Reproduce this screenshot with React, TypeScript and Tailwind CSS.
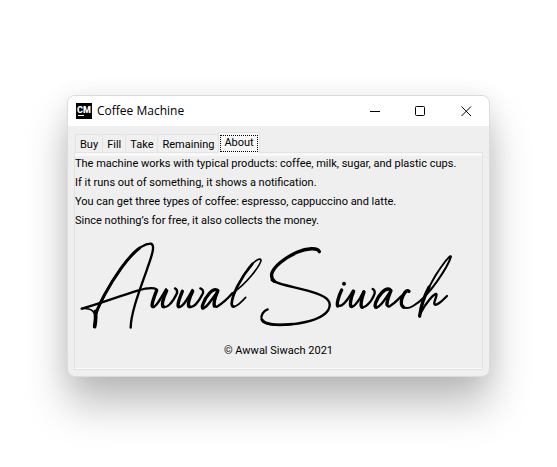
import { useState } from "react";

const tabs = ["Buy", "Fill", "Take", "Remaining", "About"];

const lines = [
  "The machine works with typical products: coffee, milk, sugar, and plastic cups.",
  "If it runs out of something, it shows a notification.",
  "You can get three types of coffee: espresso, cappuccino and latte.",
  "Since nothing’s for free, it also collects the money.",
];

// Handwritten signature, drawn as pen strokes.
function Signature() {
  return (
    <svg
      role="img"
      aria-label="Signature of Awwal Siwach"
      viewBox="12 0 1158 330"
      className="block h-[110px] w-[386px]"
      fill="none"
      stroke="#000"
      strokeLinecap="round"
      strokeLinejoin="round"
    >
      <g strokeWidth="7">
        <path d="M72 262C80 228 112 168 150 115C180 74 215 40 240 41C254 46 242 78 228 118C208 176 180 245 179 293" />
        <path d="M32 236C90 220 140 200 200 182C228 174 248 173 256 178" />
        <path d="M285 178C268 208 254 232 246 231M318 190C304 220 288 234 278 231M312 175Q320 178 318 190" />
        <path d="M364 180C350 206 336 232 324 231M396 190C382 218 366 234 356 231M388 175Q398 178 396 190" />
        <path d="M442 181C424 206 406 236 394 235M441 181C428 216 424 232 438 230C456 220 470 206 484 190" />
        <path d="M484 190C530 158 566 108 570 92C570 82 554 88 534 112C508 146 482 200 482 222C484 240 506 222 524 202" strokeWidth="5" />
        <path d="M602 150C622 166 690 173 736 190C770 202 784 216 772 240C756 264 710 278 660 283C620 287 580 285 572 268C568 256 578 242 590 238" />
        <path d="M800 222C806 240 830 212 846 182M840 224C840 242 864 216 878 184M870 226C872 242 900 222 911 190Q912 180 905 177" />
        <path d="M960 180C944 206 926 234 914 232M960 180C944 218 944 232 956 229C974 218 982 206 994 196" />
        <path d="M1014 186C1012 176 1000 186 994 202C984 230 1002 242 1026 228C1076 200 1132 106 1140 80C1138 72 1114 104 1094 136C1068 180 1048 230 1046 260" strokeWidth="6" />
        <path d="M1048 250C1066 216 1088 192 1096 192C1100 196 1088 214 1090 222C1094 230 1112 214 1128 198" />
      </g>
      <g strokeWidth="10">
        <path d="M75 250C84 224 112 168 150 115C170 88 186 68 206 54" strokeWidth="9" />
        <path d="M257 181C250 200 238 230 246 230M287 182C276 204 270 230 278 230" />
        <path d="M334 184C326 204 316 230 324 230M365 184C354 204 348 230 356 230" />
        <path d="M438 180C424 174 404 200 396 222Q392 232 396 234M440 184Q426 216 430 228" />
        <path d="M544 102C508 144 484 194 482 220Q482 230 488 230" strokeWidth="8" />
        <path d="M745 65C740 52 708 54 678 67C640 84 608 110 602 132C601 140 603 148 610 154" />
        <path d="M573 270C582 286 630 286 664 282" strokeWidth="8" />
        <path d="M812 180C804 196 796 222 800 228M848 184C840 202 834 230 842 230M879 186C872 206 866 230 874 232" />
        <path d="M956 178C942 172 922 196 914 218Q910 232 916 232M960 182Q948 210 948 224" />
        <path d="M1014 184C1006 178 996 192 992 208Q988 226 998 232M1074 172Q1052 212 1046 258" />
      </g>
      <path d="M73 244Q76 264 71 290" strokeWidth="11" />
      <path d="M34 236Q70 232 73 262" strokeWidth="5" />
      <circle cx="819" cy="161" r="6" fill="#000" stroke="none" />
    </svg>
  );
}

export default function App() {
  const [active, setActive] = useState("About");
  return (
    <main className="min-h-screen bg-white px-[67px] pt-[95px] pb-[90px] font-[Roboto,sans-serif] text-[11px] text-black">
      <section className="overflow-hidden rounded-lg border border-[#dcdcdc] bg-[#efefef] shadow-[0_28px_42px_rgba(0,0,0,0.25),0_2px_24px_rgba(0,0,0,0.08)]">
        <header className="flex h-[30px] items-center bg-white pl-2">
          <svg viewBox="0 0 16 16" className="h-4 w-4 bg-black" aria-hidden="true">
            <text x="8" y="10" textAnchor="middle" fill="#fff" className="font-[Roboto,sans-serif] text-[9px] font-black">CM</text>
            <path d="M2 12.5H8" stroke="#fff" strokeWidth="1" />
          </svg>
          <h1 className="ml-[5px] flex-1 font-['Open_Sans',sans-serif] text-[12px]">Coffee Machine</h1>
          <button aria-label="Minimize" className="flex h-full w-[46px] items-center justify-center">
            <svg viewBox="0 0 11 11" className="h-[11px] w-[11px]" stroke="#000"><path d="M0 5.5H10" /></svg>
          </button>
          <button aria-label="Maximize" className="flex h-full w-[45px] items-center justify-center">
            <svg viewBox="0 0 11 11" className="h-[11px] w-[11px]" stroke="#000" fill="none"><rect x="0.5" y="0.5" width="9" height="9" rx="1" /></svg>
          </button>
          <button aria-label="Close" className="flex h-full w-[46px] items-center justify-center">
            <svg viewBox="0 0 11 11" className="h-[11px] w-[11px]" stroke="#000"><path d="M0.5 0.5L10 10M10 0.5L0.5 10" /></svg>
          </button>
        </header>
        <div className="px-[6px] pt-2 pb-[6px]">
          <div role="tablist" className="flex h-[18px] items-end pl-px">
            {tabs.map((tab) => (
              <button
                key={tab}
                role="tab"
                aria-selected={tab === active}
                onClick={() => setActive(tab)}
                className={
                  tab === active
                    ? "relative -mb-px flex h-[21px] items-start border border-b-0 border-[#e3e3e3] bg-[#f8f8f8] px-px pt-[2px]"
                    : "h-[18px] border border-r-0 border-b-0 border-[#e3e3e3] bg-[#f0f0f0] px-1 leading-[19px]"
                }
              >
                {tab === active ? (
                  <span className="block h-[17px] border border-dotted border-black px-[3px] leading-[13px]">{tab}</span>
                ) : (
                  tab
                )}
              </button>
            ))}
          </div>
          <div role="tabpanel" className="border border-[#e3e3e3] pt-px shadow-[inset_0_3px_0_#f8f8f8,inset_0_-1px_0_#fafafa]">
            {lines.map((line) => (
              <p key={line} className="leading-[19px]">{line}</p>
            ))}
            <Signature />
            <p className="pt-px pb-[9px] text-center leading-[19px]">© Awwal Siwach 2021</p>
          </div>
        </div>
      </section>
    </main>
  );
}
